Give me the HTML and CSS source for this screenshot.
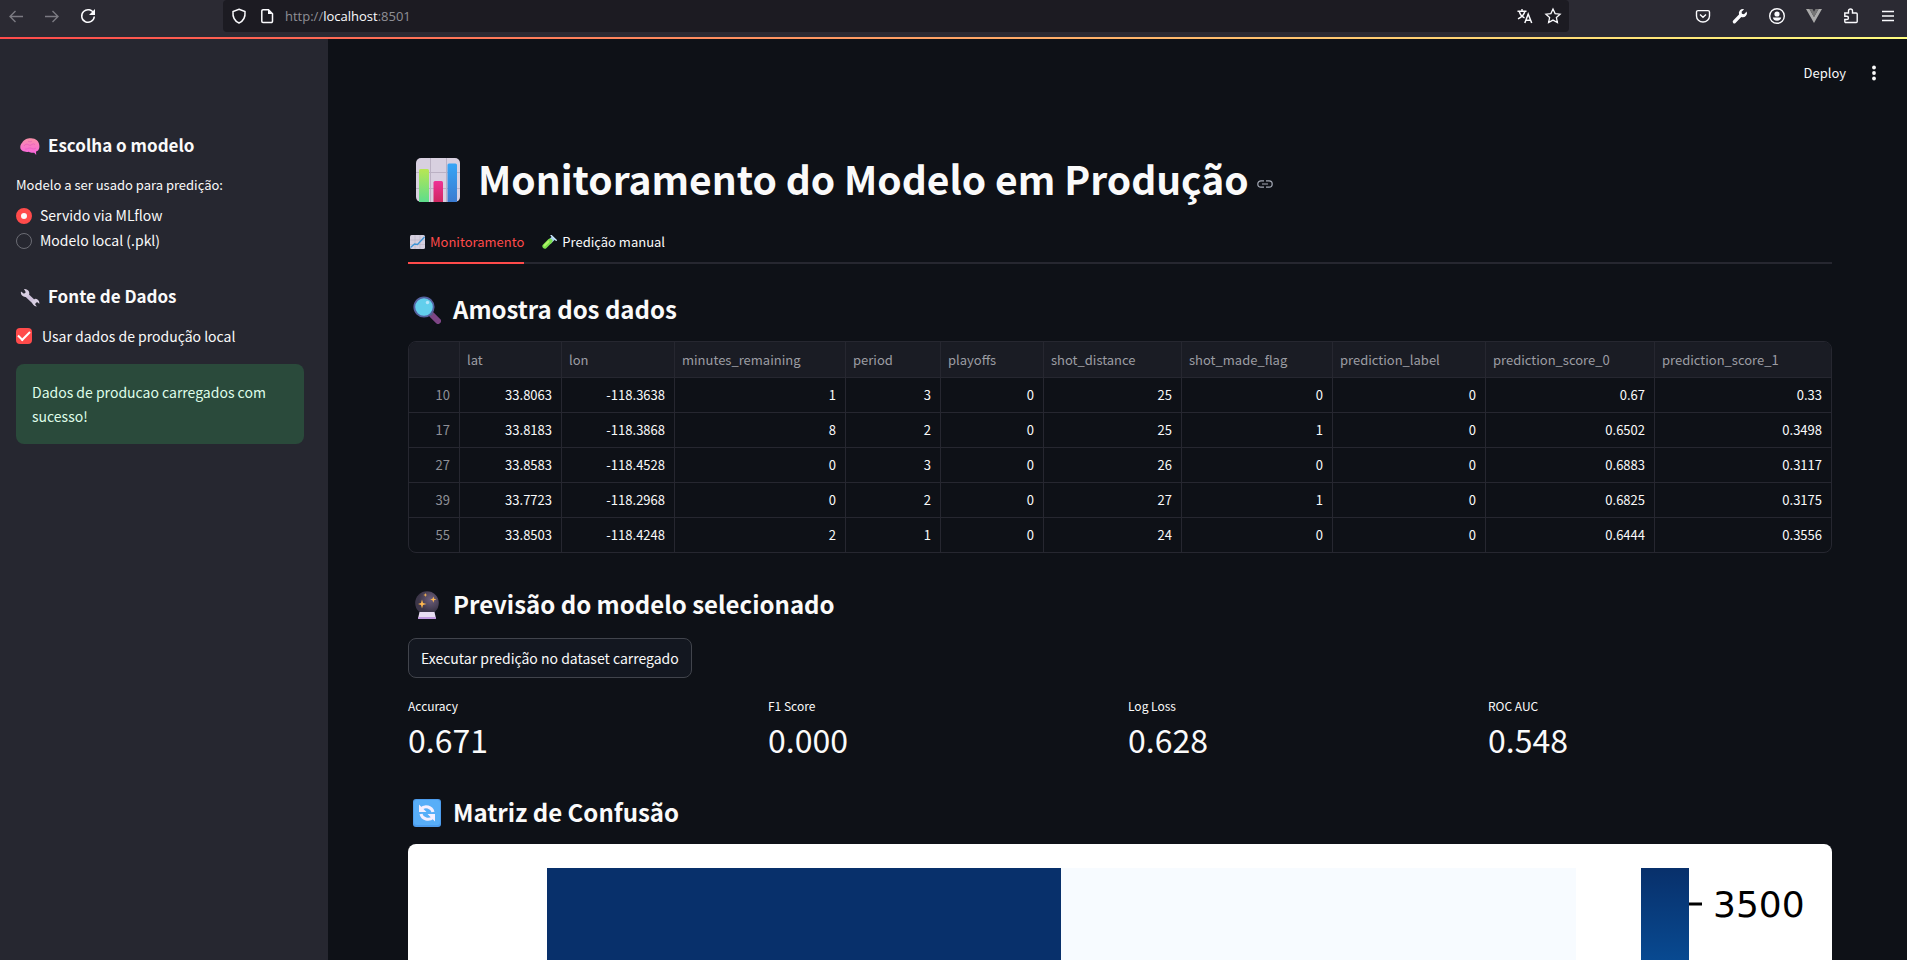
FILE: index.html
```html
<!DOCTYPE html>
<html lang="pt-BR">
<head>
<meta charset="utf-8">
<title>Monitoramento do Modelo em Produção</title>
<link rel="stylesheet" href="styles.css">
</head>
<body>
<div class="browser">
  <nav class="nav-buttons" aria-label="Navegação">
    <button class="icon-btn dim" aria-label="Voltar"><svg viewBox="0 0 16 16"><path d="M15 8.500H2M7.500 3 2 8.500 7.500 14"/></svg></button>
    <button class="icon-btn dim" aria-label="Avançar"><svg viewBox="0 0 16 16"><path d="M1 8.500h13M8.500 3 14 8.500 8.500 14"/></svg></button>
    <button class="icon-btn" aria-label="Recarregar"><svg viewBox="0 0 16 16"><path d="M13.800 5.500A6.300 6.300 0 1 0 14.300 8.500" stroke-width="1.500"/><path class="solid" d="M15 1v6H9z"/></svg></button>
  </nav>
  <div class="url-bar">
    <button class="icon-btn" aria-label="Proteção"><svg viewBox="0 0 16 16"><path d="M8 1.200 14 3.500C14.500 9 12.500 13 8 15 3.500 13 1.500 9 2 3.500z" stroke-width="1.500"/></svg></button>
    <button class="icon-btn" aria-label="Informações do site"><svg viewBox="0 0 16 16"><path d="M4 1.700h5.500l4 4v7.600a1.200 1.200 0 0 1-1.200 1.200H4a1.200 1.200 0 0 1-1.200-1.200V2.900A1.200 1.200 0 0 1 4 1.700z" stroke-width="1.500"/><path class="solid" d="M9 1.500V6h4.500z"/></svg></button>
    <p class="url">http://<span>localhost</span>:8501</p>
    <div class="url-tools">
      <button class="icon-btn" aria-label="Traduzir"><svg viewBox="0 0 16 16"><path d="M.5 3.200h9M5 1v2M7.800 3.500C7 7 4 9.500 1 10.800M2.300 3.500C3 6.500 5.500 8.800 7.500 9.800" stroke-width="1.400"/><path d="m7.800 15 3.400-9 3.500 9M9 12.200h4.500" stroke-width="1.500"/></svg></button>
      <button class="icon-btn" aria-label="Favoritar"><svg viewBox="0 0 16 16"><path d="m8 1 2.100 4.600 5 .6-3.700 3.400 1 4.900L8 12.100l-4.400 2.400 1-4.900L.9 6.200l5-.6z" stroke-width="1.300"/></svg></button>
    </div>
  </div>
  <div class="toolbar">
    <button class="icon-btn" aria-label="Pocket"><svg viewBox="0 0 16 16"><path d="M3 2.600h10a1.500 1.500 0 0 1 1.500 1.500V8a6.500 6 0 0 1-13 0V4.100A1.500 1.500 0 0 1 3 2.600zM5 6.500l3 2.800 3-2.800" stroke-width="1.400"/></svg></button>
    <button class="icon-btn" aria-label="Ferramentas"><svg viewBox="0 0 16 16"><path class="solid" d="M14.700 3.500 12 6.200 9.900 5.800 9.600 3.800 12.100 1.200A4.200 4.200 0 0 0 7 6.500L1.200 12.600a1.600 1.600 0 0 0 2.300 2.300L9.300 9a4.200 4.200 0 0 0 5.400-5.500z"/></svg></button>
    <button class="icon-btn" aria-label="Conta"><svg viewBox="0 0 16 16"><circle cx="8" cy="8" r="7.300" stroke-width="1.400"/><circle class="solid" cx="8" cy="6" r="2.600"/><path class="solid" d="M3.800 9.500h8.400c-.3 2-2 3.300-4.200 3.300S4.100 11.500 3.800 9.500z"/></svg></button>
    <button class="icon-btn" aria-label="Vue"><svg viewBox="0 0 16 16"><path d="M0 1h3.500L8 9l4.500-8H16L8 15z" fill="#aaa" stroke="none"/><path d="M3.500 1h3L8 3.800 9.500 1h3L8 9z" fill="#777" stroke="none"/></svg></button>
    <button class="icon-btn" aria-label="Extensões"><svg viewBox="0 0 16 16"><path d="M1.800 5h3.700V3a2 2 0 0 1 4 0v2h3.700a1 1 0 0 1 1 1v7.500a1 1 0 0 1-1 1H2.800a1 1 0 0 1-1-1V11.500h2a1.600 1.600 0 0 0 0-3.200h-2z" stroke-width="1.400"/></svg></button>
    <button class="icon-btn" aria-label="Menu"><svg viewBox="0 0 16 16"><path d="M2 3.500h12M2 8h12M2 12.500h12"/></svg></button>
  </div>
</div>
<div class="accent"></div>

<div class="app">
  <aside class="sidebar">
    <h3><svg class="emoji" viewBox="0 0 20 20"><defs><linearGradient id="brain" x2="0" y2="1"><stop offset="0" stop-color="#f890a8"/><stop offset="1" stop-color="#fa62e2"/></linearGradient></defs><path d="M2 6C4 2 8 1 11 1.200c5 0 8 3 8.300 7 .5 3-.8 5.800-3.300 6.300l.2 3.500-2-2.300c-2 .5-4-.2-5.500-1C5 15.500.2 13.500.3 10.500.2 8.500.8 7 2 6z" fill="url(#brain)"/><path d="M4 9c2-3 4-1.500 6-.5 2-.8 3-2.500 5-1M5 12c2 .5 3-1 5-1s3 2 6 0M8 4c1 1 3 1 4 0" fill="none" stroke="#e058b8" stroke-width=".6"/></svg>Escolha o modelo</h3>
    <fieldset class="radios">
      <legend>Modelo a ser usado para predição:</legend>
      <label><input type="radio" name="modelo" checked>Servido via MLflow</label>
      <label><input type="radio" name="modelo">Modelo local (.pkl)</label>
    </fieldset>
    <h3><svg class="emoji" viewBox="0 0 20 20"><path d="M5.500 6 14.500 14.500" stroke="#cfc3dc" stroke-width="4"/><path d="M4 1a4.500 4.500 0 0 1 5 6L6 9A4.500 4.500 0 0 1 1 3.500l3 2.300 1.800-1.600zM12.500 13 15 10.800a4.300 4.300 0 0 1 4.300 5L17 14l-2 2 1.800 2.500a4.300 4.300 0 0 1-4.300-5.500z" fill="#d8cfe2"/></svg>Fonte de Dados</h3>
    <label class="check"><input type="checkbox" checked>Usar dados de produção local</label>
    <div class="alert" role="status">Dados de producao carregados com sucesso!</div>
  </aside>

  <main class="main">
    <header class="app-header">
      <button class="deploy">Deploy</button>
      <button class="more" aria-label="Mais opções"><svg viewBox="0 0 4 16"><circle cx="2" cy="2.500" r="1.900"/><circle cx="2" cy="8" r="1.900"/><circle cx="2" cy="13.500" r="1.900"/></svg></button>
    </header>

    <h1 id="monitoramento"><svg class="emoji" viewBox="0 0 44 44"><defs><linearGradient id="g1" x2="0" y2="1"><stop offset="0" stop-color="#b8e653"/><stop offset="1" stop-color="#5ddd8c"/></linearGradient><linearGradient id="g2" x2="0" y2="1"><stop offset="0" stop-color="#ee3296"/><stop offset="1" stop-color="#cf2860"/></linearGradient><linearGradient id="g3" x2="0" y2="1"><stop offset="0" stop-color="#36a5f6"/><stop offset="1" stop-color="#3b7bd0"/></linearGradient></defs><rect width="44" height="44" rx="5" fill="#d8d0e0"/><path d="M14.500 0v44M30.500 0v44M0 14.500h44M0 30.500h44" stroke="#bbb1c4"/><path d="M3 44V12.500A1.500 1.500 0 0 1 4.500 11h7a1.500 1.500 0 0 1 1.500 1.500V44z" fill="url(#g1)"/><path d="M17.500 44V24.500A1.500 1.500 0 0 1 19 23h6.500a1.500 1.500 0 0 1 1.500 1.500V44z" fill="url(#g2)"/><path d="M31.500 44V7A1.500 1.500 0 0 1 33 5.500h6.500A1.500 1.500 0 0 1 41 7v37z" fill="url(#g3)"/></svg>Monitoramento do Modelo em Produção<a class="anchor" href="#monitoramento" aria-label="Link para o título"><svg viewBox="0 0 16 8"><path d="M7 .8H4a3.200 3.200 0 0 0 0 6.400h3M9 .8h3a3.200 3.200 0 0 1 0 6.400H9M5 4h6" fill="none" stroke="#a3a8b4" stroke-width="1.200"/></svg></a></h1>

    <div class="tabs" role="tablist">
      <button class="tab active" role="tab" aria-selected="true"><svg class="emoji" viewBox="0 0 15 14"><rect width="15" height="14" rx="1.500" fill="#d5cfdf"/><path d="M5 0v14M10 0v14M0 5h15M0 9.500h15" stroke="#bab3c5" stroke-width=".6"/><path d="M.5 12.500 4.500 9l3 .5L14.500 2" fill="none" stroke="#3d94d6" stroke-width="1.300"/></svg>Monitoramento</button>
      <button class="tab" role="tab" aria-selected="false"><svg class="emoji" viewBox="0 0 15 14"><path d="M11.500 3 7 7.500" stroke="#a8d2ee" stroke-width="4.500"/><path d="M8 6 2.800 11.300" stroke="#7be04c" stroke-width="4.800" stroke-linecap="round"/><path d="m6.500 6.500-4 4" stroke="#b4f46a" stroke-width="1.800" stroke-linecap="round"/><path d="m9.200.5 5 4.800" stroke="#cbe9ff" stroke-width="1.500" stroke-linecap="round"/></svg>Predição manual</button>
    </div>

    <section class="block sample">
      <h2><svg class="emoji" viewBox="0 0 28 28"><path d="m19 19 6 6" stroke="#7d4585" stroke-width="6" stroke-linecap="round"/><path d="m16 16 3 3" stroke="#55617d" stroke-width="3"/><circle cx="11" cy="11" r="9.700" fill="#62cfec" stroke="#5562a0" stroke-width="1.800"/><circle cx="14.500" cy="6.500" r="1.700" fill="#b5e5fa"/></svg>Amostra dos dados</h2>
      <div class="frame">
      <table>
        <colgroup><col class="c-index"><col class="c-lat"><col class="c-lon"><col class="c-min"><col class="c-period"><col class="c-play"><col class="c-dist"><col class="c-flag"><col class="c-label"><col class="c-s0"><col class="c-s1"></colgroup>
        <thead><tr><th></th><th>lat</th><th>lon</th><th>minutes_remaining</th><th>period</th><th>playoffs</th><th>shot_distance</th><th>shot_made_flag</th><th>prediction_label</th><th>prediction_score_0</th><th>prediction_score_1</th></tr></thead>
        <tbody>
          <tr><th>10</th><td>33.8063</td><td>-118.3638</td><td>1</td><td>3</td><td>0</td><td>25</td><td>0</td><td>0</td><td>0.67</td><td>0.33</td></tr>
          <tr><th>17</th><td>33.8183</td><td>-118.3868</td><td>8</td><td>2</td><td>0</td><td>25</td><td>1</td><td>0</td><td>0.6502</td><td>0.3498</td></tr>
          <tr><th>27</th><td>33.8583</td><td>-118.4528</td><td>0</td><td>3</td><td>0</td><td>26</td><td>0</td><td>0</td><td>0.6883</td><td>0.3117</td></tr>
          <tr><th>39</th><td>33.7723</td><td>-118.2968</td><td>0</td><td>2</td><td>0</td><td>27</td><td>1</td><td>0</td><td>0.6825</td><td>0.3175</td></tr>
          <tr><th>55</th><td>33.8503</td><td>-118.4248</td><td>2</td><td>1</td><td>0</td><td>24</td><td>0</td><td>0</td><td>0.6444</td><td>0.3556</td></tr>
        </tbody>
      </table>
      </div>
    </section>

    <section class="block forecast">
      <h2><svg class="emoji" viewBox="0 0 28 28"><defs><radialGradient id="ball" cx=".65" cy=".35"><stop offset="0" stop-color="#6d5f7c"/><stop offset="1" stop-color="#3c3649"/></radialGradient></defs><circle cx="14" cy="12" r="11.800" fill="url(#ball)"/><path d="M6.500 21h15l1.500 6.500H5z" fill="#e8def2"/><path d="M5.300 26h17.400l.3 2H5z" fill="#c19be0"/><path d="m9 8.500 1 3.500 3.500 1-3.500 1-1 3.500L8 14l-3-1 3-1zM20.300 5.500l.8 2.200 2.400.8-2.400.8-.8 2.400-.8-2.400-2.300-.8 2.300-.8zM12.300 2l.5 1.500 1.500.5-1.500.6-.5 1.500-.5-1.500-1.500-.6 1.500-.5z" fill="#ffb850"/></svg>Previsão do modelo selecionado</h2>
      <button class="run">Executar predição no dataset carregado</button>
      <dl class="metrics">
        <div><dt>Accuracy</dt><dd>0.671</dd></div>
        <div><dt>F1 Score</dt><dd>0.000</dd></div>
        <div><dt>Log Loss</dt><dd>0.628</dd></div>
        <div><dt>ROC AUC</dt><dd>0.548</dd></div>
      </dl>
    </section>

    <section class="block confusion">
      <h2><svg class="emoji" viewBox="0 0 28 28"><rect width="28" height="28" rx="3" fill="#4d9dee"/><rect x="1" y="1" width="26" height="25" rx="3" fill="#58aef8"/><path d="M8 9.800A7 6.500 0 0 1 20 13M20 18.200A7 6.500 0 0 1 8 15" fill="none" stroke="#f5efff" stroke-width="3"/><path d="M6 5.500v7.500h7.500zM22 22.500V15h-7.500z" fill="#f5efff"/></svg>Matriz de Confusão</h2>
      <svg class="chart" viewBox="0 0 1424 1090" role="img" aria-label="Matriz de confusão">
        <defs><linearGradient id="blues" x2="0" y2="1"><stop offset="0" stop-color="#08306b"/><stop offset=".125" stop-color="#08519c"/><stop offset=".375" stop-color="#4292c6"/><stop offset=".625" stop-color="#9ecae1"/><stop offset="1" stop-color="#f7fbff"/></linearGradient></defs>
        <rect width="1424" height="1090" fill="#fff"/>
        <rect x="139" y="24" width="514" height="480" fill="#08306b"/>
        <rect x="653" y="24" width="515" height="480" fill="#f7fbff"/>
        <rect x="139" y="504" width="514" height="480" fill="#6aaed6"/>
        <rect x="653" y="504" width="515" height="480" fill="#f7fbff"/>
        <rect x="1233" y="24" width="48" height="960" fill="url(#blues)"/>
        <path d="M1281 60h13" stroke="#000" stroke-width="3"/>
        <text x="1305" y="73">3500</text>
      </svg>
    </section>
  </main>
</div>
</body>
</html>
```

FILE: styles.css
```css
* { box-sizing: border-box; }
body {
  margin: 0;
  height: 100vh;
  display: flex;
  flex-direction: column;
  overflow: hidden;
  background: #0e1117;
  color: #fafafa;
  font: 14px/24px "Noto Sans CJK SC", "Noto Sans", sans-serif;
}
button { font: inherit; color: inherit; background: none; border: 0; padding: 0; }
h1, h2, h3, p, dl, dd { margin: 0; }
svg { display: block; flex: none; }

/* Browser chrome */
.browser { flex: none; display: flex; height: 37px; background: #2b2a33; }
.nav-buttons { width: 223px; display: flex; gap: 20px; padding: 8px; }
.icon-btn { width: 16px; height: 16px; flex: none; color: #fbfbfe; }
.icon-btn.dim { color: #7b7a82; }
.icon-btn svg { width: 16px; height: 16px; fill: none; stroke: currentColor; stroke-width: 1.400; overflow: visible; }
.icon-btn .solid { fill: currentColor; stroke: none; }
.url-bar { flex: 1; height: 32px; display: flex; align-items: center; gap: 12px; padding: 0 8px; background: #1c1b22; border-radius: 4px; }
.url { flex: 1; margin-left: -2px; font: 13px/20px "Open Sans", "Noto Sans", sans-serif; color: #8f8f96; }
.url span { color: #fbfbfe; }
.url-tools { display: flex; gap: 12px; }
.toolbar { width: 338px; display: flex; justify-content: flex-end; gap: 21px; padding: 8px 11px; }
.accent { flex: none; height: 2px; background: linear-gradient(90deg, #ff4b4b, #fffd80); }

/* Layout */
.app { flex: 1; min-height: 0; display: flex; }
.sidebar { width: 328px; flex: none; padding: 90px 24px 0 16px; background: #262730; }
.main { flex: 1; min-width: 0; padding: 0 75px 0 80px; overflow: hidden; }

/* Sidebar */
.sidebar h3 { display: flex; align-items: center; gap: 8px; height: 32px; padding: 0 4px; font-size: 17px; line-height: 24px; }
.sidebar .emoji { width: 20px; height: 20px; margin-top: 4px; }
.radios { border: 0; margin: 14px 0 27px; padding: 0; }
legend { padding: 0; font-size: 13px; line-height: 20px; margin-bottom: 8px; }
.radios label { display: flex; align-items: center; gap: 8px; line-height: 25px; }
.check { display: flex; align-items: center; gap: 10px; margin: 12px 0 16px; }
.radios input, .check input { appearance: none; width: 16px; height: 16px; margin: 0; flex: none; border: 1px solid #6b6c74; border-radius: 50%; }
.radios input:checked { border: 5px solid #ff4b4b; background: #fafafa; }
.check input { border: 0; border-radius: 4px; background: #ff4b4b; display: grid; place-items: center; }
.check input::after { content: ""; width: 10px; height: 5px; margin-bottom: 3px; border: solid #fff; border-width: 0 0 2px 2px; transform: rotate(-45deg); }
.alert { padding: 16px; border-radius: 8px; background: #2a4a3b; color: #dffde9; }

/* App header and title */
.app-header { display: flex; justify-content: flex-end; align-items: center; gap: 26px; height: 68px; margin-right: -44px; }
.deploy { font-size: 13px; }
.more svg { width: 4px; height: 16px; fill: #fafafa; }
h1 { display: flex; align-items: center; margin-top: 45px; padding-left: 8px; font-size: 39px; line-height: 53px; }
h1 .emoji { width: 44px; height: 44px; margin: 2px 18px 0 0; }
.anchor { margin-left: 8px; padding-top: 10px; }
.anchor svg { width: 16px; height: 8px; }

/* Tabs */
.tabs { display: flex; gap: 16px; height: 42px; margin-top: 17px; box-shadow: inset 0 -2px #262730; }
.tab { display: flex; align-items: center; gap: 5px; padding-left: 2px; font-size: 13px; border-bottom: 2px solid transparent; }
.tab .emoji { width: 15px; height: 14px; }
.tab.active { color: #ff4b4b; border-color: #ff4b4b; }

/* Content blocks */
.block { padding-top: 29px; }
h2 { display: flex; align-items: center; gap: 12px; padding-left: 5px; margin-bottom: 16px; font-size: 24px; line-height: 32px; }
h2 .emoji { width: 28px; height: 28px; margin-top: 2px; }
.frame { border: 1px solid #262730; border-radius: 8px; overflow: hidden; }
table { width: 100%; table-layout: fixed; border-collapse: separate; border-spacing: 0; font-size: 13px; }
th, td { height: 35px; padding: 0 9px 0 7px; line-height: 20px; text-align: right; white-space: nowrap; border-right: 1px solid #262730; border-bottom: 1px solid #262730; }
th { font-weight: 400; color: #8f9096; }
thead th { height: 36px; text-align: left; background: #1a1c24; color: #9c9da3; }
th:last-child, td:last-child { border-right: 0; }
tbody tr:last-child > * { height: 34px; border-bottom: 0; }
.c-index { width: 51px; }
.c-lat { width: 102px; }
.c-lon { width: 113px; }
.c-min { width: 171px; }
.c-period { width: 95px; }
.c-play { width: 103px; }
.c-dist { width: 138px; }
.c-flag { width: 151px; }
.c-label { width: 153px; }
.c-s0 { width: 169px; }
.c-s1 { width: 176px; }

.forecast { padding-top: 35px; }
.forecast h2 { margin-bottom: 18px; }
.run { display: block; height: 40px; padding: 0 12px; border: 1px solid #41444c; border-radius: 8px; background: #131720; }
.metrics { display: grid; grid-template-columns: repeat(4, 1fr); gap: 16px; margin-top: 18px; }
dt { font-size: 12px; line-height: 20px; }
dd { margin: 1px 0 2px; font-size: 32px; line-height: 44px; }
.confusion { padding-top: 33px; }
.chart { width: 100%; height: auto; border-radius: 8px; }
.chart text { font: 36px "DejaVu Sans", sans-serif; fill: #000; }
```
